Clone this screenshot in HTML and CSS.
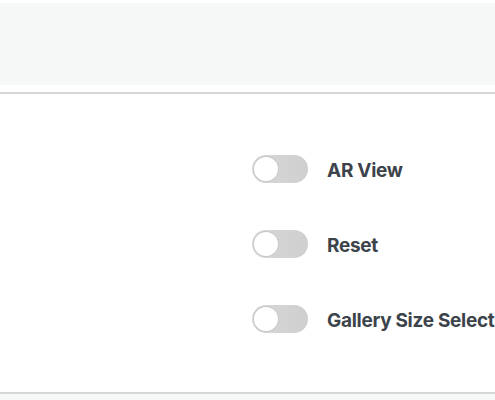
FILE: index.html
```html
<!DOCTYPE html>
<html>
<head>
<meta charset="utf-8">
<link rel="stylesheet" href="styles.css">
</head>
<body>
<div class="top"></div>
<div class="panel">
  <div class="list">
    <div class="row"><span class="toggle"><span class="knob"></span></span><span class="label">AR View</span></div>
    <div class="row"><span class="toggle"><span class="knob"></span></span><span class="label">Reset</span></div>
    <div class="row"><span class="toggle"><span class="knob"></span></span><span class="label">Gallery Size Select</span></div>
  </div>
</div>
<div class="bottom"></div>
</body>
</html>
```
FILE: styles.css
```css
html, body {
  margin: 0;
  padding: 0;
  background: #ffffff;
  overflow: hidden;
  width: 495px;
  height: 400px;
}
body {
  font-family: Inter, "Liberation Sans", sans-serif;
  padding-top: 3px;
  box-sizing: border-box;
}
.top {
  height: 82px;
  background: #f6f7f7;
  margin-bottom: 7px;
}
.panel {
  border-top: 2px solid #d6d6d8;
  border-bottom: 2px solid #d6d6d8;
  height: 302px;
  box-sizing: border-box;
  padding-top: 61px;
  overflow: hidden;
}
.list {
  display: flex;
  flex-direction: column;
  gap: 47px;
  padding-left: 252px;
  white-space: nowrap;
}
.row {
  display: flex;
  align-items: center;
  gap: 19px;
  height: 28px;
}
.toggle {
  flex: none;
  width: 56px;
  height: 28px;
  border-radius: 14px;
  background: linear-gradient(90deg, #d8d8d8, #cfcfcf);
  display: flex;
  align-items: center;
  padding-left: 2px;
  box-sizing: border-box;
}
.knob {
  width: 24px;
  height: 24px;
  border-radius: 50%;
  background: #ffffff;
  box-shadow: 0 0 0 1px #c8c8c8;
}
.label {
  font-size: 19px;
  font-weight: 700;
  color: #3c434a;
  letter-spacing: -0.3px;
  padding-top: 3px;
}
.bottom {
  height: 10px;
  background: #f6f7f7;
}
```
